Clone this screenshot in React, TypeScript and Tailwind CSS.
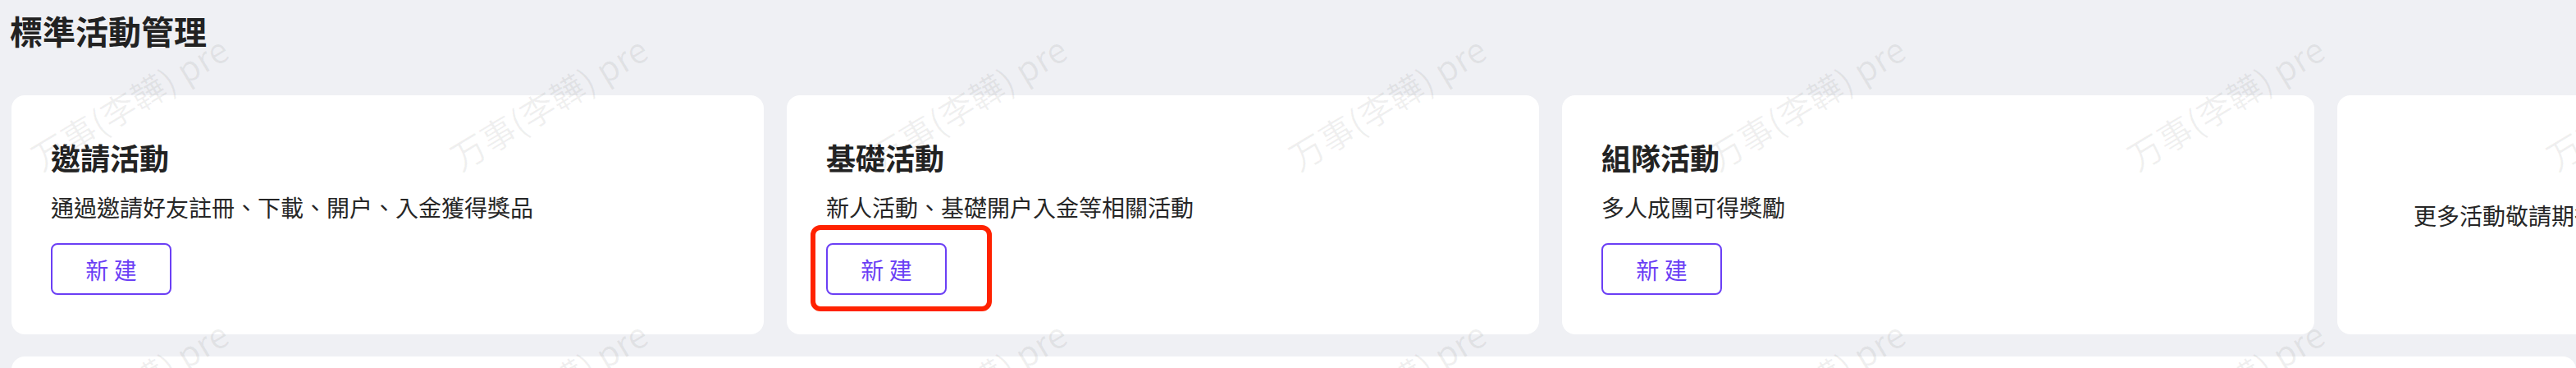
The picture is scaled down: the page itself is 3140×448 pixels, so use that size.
import React from "react";

const cards = [
  { title: "邀請活動", desc: "通過邀請好友註冊、下載、開户、入金獲得獎品", highlight: false },
  { title: "基礎活動", desc: "新人活動、基礎開户入金等相關活動", highlight: true },
  { title: "組隊活動", desc: "多人成團可得獎勵", highlight: false },
];

function Card({ title, desc, highlight }: { title: string; desc: string; highlight: boolean }) {
  return (
    <div className="w-[917px] h-[291px] flex-none rounded-[16px] bg-white pl-[48px] pt-[52px]">
      <div className="text-[36px] leading-[46px] font-bold text-[#222222]">{title}</div>
      <div className="mt-[18px] text-[28px] leading-[40px] text-[#262626]">{desc}</div>
      <div className="relative mt-[24px] w-[147px]">
        <button className="flex w-[147px] h-[63px] items-center justify-center rounded-[8px] border-2 border-[#6b3ff5] bg-white text-[28px] leading-none text-[#6b3ff5]">
          新 建
        </button>
        {highlight && (
          <div className="pointer-events-none absolute left-[-19px] top-[-22px] h-[105px] w-[221px] rounded-[12px] border-[6px] border-[#ff2200]" />
        )}
      </div>
    </div>
  );
}

export default function App() {
  const marks: { x: number; y: number }[] = [];
  for (const y of [212, 559]) {
    for (let k = -1; k < 7; k++) marks.push({ x: 52 + 511 * k, y });
  }
  return (
    <div className="relative h-[448px] w-[3140px] overflow-hidden bg-[#eff0f4] font-['Noto_Sans_CJK_TC','Noto_Sans',sans-serif]">
      <div className="pl-[12px] pt-[17px]">
        <h1 className="text-[40px] leading-[40px] font-bold text-[#222222]">標準活動管理</h1>
      </div>
      <div className="mt-[59px] flex gap-[28px] pl-[14px]">
        {cards.map((c) => (
          <Card key={c.title} {...c} />
        ))}
        <div className="flex h-[291px] w-[410px] flex-none items-center justify-center rounded-[16px] bg-white text-[28px] leading-[40px] text-[#262626]">
          更多活動敬請期待
        </div>
      </div>
      <div className="ml-[14px] mt-[27px] h-[200px] rounded-t-[16px] bg-white" />
      <div className="pointer-events-none absolute inset-0 font-['Noto_Sans_CJK_SC',sans-serif]">
        {marks.map((m, i) => (
          <span
            key={i}
            className="absolute origin-bottom-left rotate-[-31deg] whitespace-nowrap text-[42px] leading-none text-black/[0.06]"
            style={{ left: m.x, top: m.y - 42 }}
          >
            万事(李韡) pre
          </span>
        ))}
      </div>
    </div>
  );
}
